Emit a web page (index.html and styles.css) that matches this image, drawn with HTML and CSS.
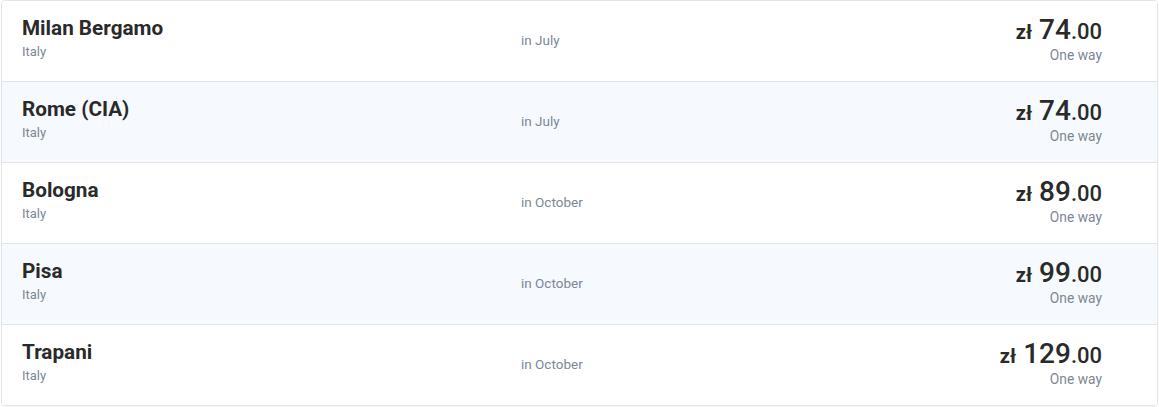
FILE: index.html
```html
<!DOCTYPE html>
<html>
<head>
<meta charset="utf-8">
<link rel="stylesheet" href="styles.css">
</head>
<body>
<div class="wrap">
  <div class="card">
    <div class="row">
      <div class="dest"><div class="name">Milan Bergamo</div><div class="country">Italy</div></div>
      <div class="when">in July</div>
      <div class="price"><div class="amount"><span class="cur">zł</span> <span class="int">74</span><span class="dec">.00</span></div><div class="type">One way</div></div>
    </div>
    <div class="row alt">
      <div class="dest"><div class="name">Rome (CIA)</div><div class="country">Italy</div></div>
      <div class="when">in July</div>
      <div class="price"><div class="amount"><span class="cur">zł</span> <span class="int">74</span><span class="dec">.00</span></div><div class="type">One way</div></div>
    </div>
    <div class="row">
      <div class="dest"><div class="name">Bologna</div><div class="country">Italy</div></div>
      <div class="when">in October</div>
      <div class="price"><div class="amount"><span class="cur">zł</span> <span class="int">89</span><span class="dec">.00</span></div><div class="type">One way</div></div>
    </div>
    <div class="row alt">
      <div class="dest"><div class="name">Pisa</div><div class="country">Italy</div></div>
      <div class="when">in October</div>
      <div class="price"><div class="amount"><span class="cur">zł</span> <span class="int">99</span><span class="dec">.00</span></div><div class="type">One way</div></div>
    </div>
    <div class="row">
      <div class="dest"><div class="name">Trapani</div><div class="country">Italy</div></div>
      <div class="when">in October</div>
      <div class="price"><div class="amount"><span class="cur">zł</span> <span class="int">129</span><span class="dec">.00</span></div><div class="type">One way</div></div>
    </div>
  </div>
</div>
</body>
</html>
```

FILE: styles.css
```css
* { box-sizing: border-box; }
html, body { margin: 0; padding: 0; background: #fff; }
body { font-family: Roboto, "Liberation Sans", sans-serif; }
.wrap { padding: 0 1px 1px 1px; }
.card {
  border: 1px solid #e1e4e8;
  border-radius: 4px;
  overflow: hidden;
  box-shadow: 0 1px 1px rgba(0,0,0,0.04);
}
.row {
  height: 81px;
  display: grid;
  grid-template-columns: 499px 1fr auto;
  align-items: center;
  padding: 0 55px 0 20px;
  border-bottom: 1px solid #e1e4e8;
  background: #fff;
}
.row:last-child { border-bottom: none; height: 80px; }
.row.alt { background: #f6f9fe; }
.dest { margin-top: -5px; }
.name {
  font-size: 20.7px;
  font-weight: 700;
  color: #2a2a2a;
  line-height: 24px;
}
.country {
  font-size: 13px;
  color: #7d8795;
  line-height: 18px;
  margin-top: 3px;
}
.when {
  font-size: 13.5px;
  color: #7d8795;
  margin-top: -3px;
}
.price { text-align: right; margin-top: -5px; }
.amount {
  color: #2a2a2a;
  font-weight: 500;
  line-height: 32px;
  white-space: nowrap;
}
.cur { font-size: 20px; font-weight: 700; margin-right: 3px; }
.int { font-size: 28px; }
.dec { font-size: 22px; }
.type {
  font-size: 13.8px;
  color: #7d8795;
  line-height: 16px;
  margin-top: -3px;
}
```
